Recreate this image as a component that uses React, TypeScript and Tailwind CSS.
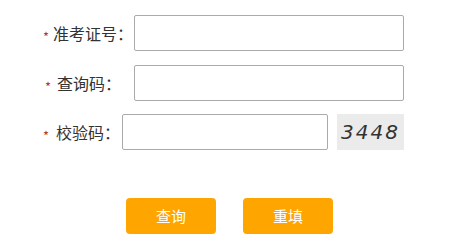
import React from "react";

const font = { fontFamily: '"Noto Sans CJK SC", "Noto Sans", sans-serif' };

function Star() {
  return <span className="text-[13px] leading-none text-[#b03a2e] mr-[4px] relative top-[3px]">*</span>;
}

export default function App() {
  return (
    <div className="w-[467px] h-[248px] bg-white text-[#333]" style={font}>
      <div className="pt-[15px] flex flex-col">
        <div className="flex items-center h-[36px]">
          <div className="w-[134px] pl-[43px] flex items-center text-[16px]">
            <Star />
            <span>准考证号：</span>
          </div>
          <input className="w-[270px] h-[36px] border border-[#aaa] rounded-[2px] outline-none" />
        </div>
        <div className="flex items-center h-[36px] mt-[14px]">
          <div className="w-[134px] pl-[45px] flex items-center text-[16px]">
            <Star />
            <span className="ml-[2px]">查询码：</span>
          </div>
          <input className="w-[270px] h-[36px] border border-[#aaa] rounded-[2px] outline-none" />
        </div>
        <div className="flex items-center h-[36px] mt-[13px]">
          <div className="w-[122px] pl-[43px] flex items-center text-[16px]">
            <Star />
            <span className="ml-[3px]">校验码：</span>
          </div>
          <input className="w-[206px] h-[36px] border border-[#aaa] rounded-[2px] outline-none" />
          <div
            className="ml-[9px] w-[67px] h-[36px] bg-[#ebebeb] flex items-center justify-center text-[20px] italic tracking-[2px] text-[#333]"
            style={{ fontFamily: '"DejaVu Sans", sans-serif' }}
          >
            3448
          </div>
        </div>
        <div className="flex mt-[48px] pl-[126px] gap-[27px]">
          <button className="w-[90px] h-[36px] bg-[#ffa500] rounded-[4px] text-white text-[15px]">查询</button>
          <button className="w-[90px] h-[36px] bg-[#ffa500] rounded-[4px] text-white text-[15px]">重填</button>
        </div>
      </div>
    </div>
  );
}
